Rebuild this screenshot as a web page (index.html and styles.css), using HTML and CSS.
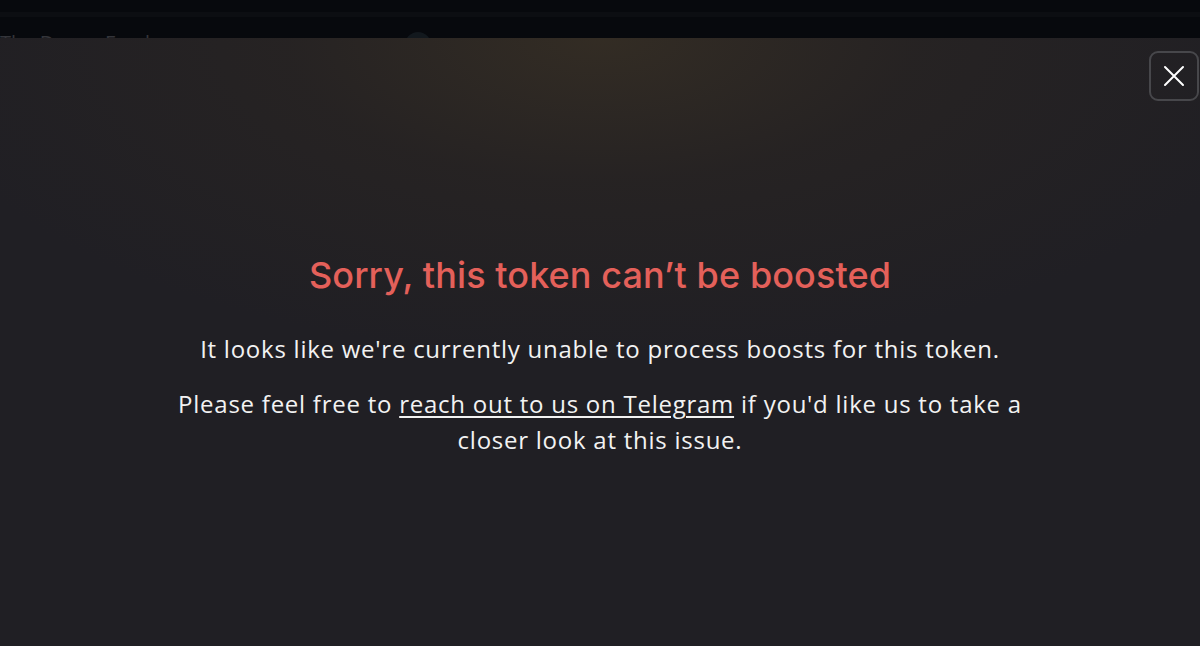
FILE: index.html
```html
<!DOCTYPE html>
<html lang="en">
<head>
<meta charset="utf-8">
<title>Boost unavailable</title>
<link rel="stylesheet" href="styles.css">
</head>
<body>
<header class="topbar">
  <div class="topbar-line"></div>
  <div class="topbar-title">The Degen Feed</div>
  <div class="topbar-avatar"></div>
</header>
<main class="modal">
  <button class="close-btn" aria-label="Close">
    <svg width="24" height="24" viewBox="0 0 24 24" fill="none" stroke="#ffffff" stroke-width="2" stroke-linecap="round">
      <path d="M3 3 L21 21 M21 3 L3 21"/>
    </svg>
  </button>
  <section class="notice">
    <h1 class="notice-title">Sorry, this token can’t be boosted</h1>
    <p class="notice-text">It looks like we're currently unable to process boosts for this token.</p>
    <p class="notice-text">Please feel free to <a href="#" class="notice-link">reach out to us on Telegram</a> if you'd like us to take a closer look at this issue.</p>
  </section>
</main>
</body>
</html>
```

FILE: styles.css
```css
* { box-sizing: border-box; }

html, body {
  margin: 0;
  height: 100%;
}

body {
  display: flex;
  flex-direction: column;
  background: #07090d;
  overflow: hidden;
  font-family: "Open Sans", "Noto Sans", sans-serif;
}

.topbar {
  height: 38px;
  flex: none;
  position: relative;
  background: #07090d;
  overflow: hidden;
}

.topbar-line {
  height: 5px;
  margin-top: 12px;
  background: #0c0e12;
}

.topbar-title {
  position: absolute;
  left: 0;
  top: 33px;
  color: #34353a;
  font-size: 20px;
  line-height: 20px;
}

/* partly hidden avatar behind the modal */
.topbar-avatar {
  position: absolute;
  left: 405px;
  top: 32px;
  width: 26px;
  height: 26px;
  border-radius: 50%;
  background: #12181d;
}

.modal {
  flex: 1;
  position: relative;
  display: flex;
  justify-content: center;
  background:
    radial-gradient(ellipse 700px 320px at 50% 0%, rgba(52, 45, 36, 0.95) 0%, rgba(42, 37, 34, 0.6) 45%, rgba(32, 31, 36, 0) 100%),
    #201f24;
}

.close-btn {
  position: absolute;
  top: 13px;
  right: 1px;
  width: 50px;
  height: 50px;
  border: 2px solid #47474b;
  border-radius: 9px;
  background: transparent;
  display: flex;
  align-items: center;
  justify-content: center;
  padding: 0;
  cursor: pointer;
}

.notice {
  padding-top: 214px;
  width: 880px;
  text-align: center;
}

.notice-title {
  margin: 0 0 33px;
  font-family: "Inter", "Noto Sans", sans-serif;
  font-weight: 500;
  font-size: 36px;
  line-height: 46px;
  color: #e4605a;
  letter-spacing: 0.1px;
}

.notice-text {
  margin: 0 0 19px;
  color: #f2f2f2;
  font-size: 24px;
  line-height: 36px;
  letter-spacing: 0.75px;
}

.notice-link {
  color: #f2f2f2;
  text-decoration: underline;
  text-underline-offset: 3px;
  text-decoration-thickness: 1.5px;
}
```
